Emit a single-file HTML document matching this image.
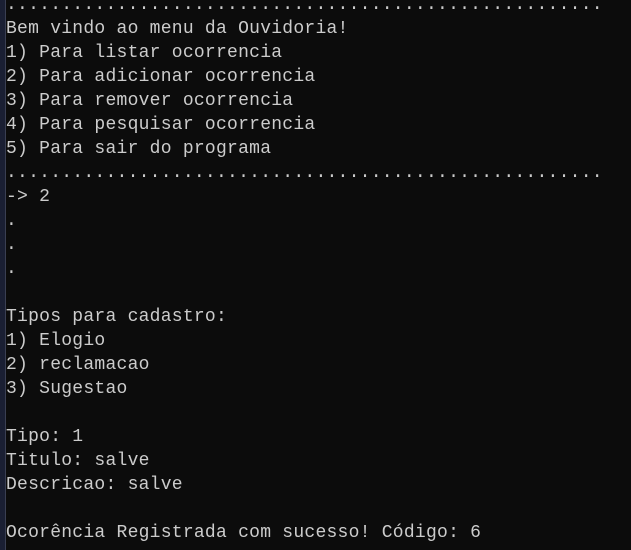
<!DOCTYPE html>
<html><head><meta charset="utf-8"><style>
html,body{margin:0;padding:0;width:631px;height:550px;overflow:hidden;background:#0c0c0c;}
.strip{position:absolute;left:0;top:0;width:5px;height:550px;background:#1a1f33;border-right:1px solid #3a3f52;}
pre{position:absolute;left:6px;top:-7px;margin:0;font-family:"Liberation Mono",monospace;font-size:18px;letter-spacing:0.25px;line-height:24px;color:#cccccc;white-space:pre;}
</style></head><body>
<div class="strip"></div>
<pre>......................................................
Bem vindo ao menu da Ouvidoria!
1) Para listar ocorrencia
2) Para adicionar ocorrencia
3) Para remover ocorrencia
4) Para pesquisar ocorrencia
5) Para sair do programa
......................................................
-&gt; 2
.
.
.

Tipos para cadastro:
1) Elogio
2) reclamacao
3) Sugestao

Tipo: 1
Titulo: salve
Descricao: salve

Ocorência Registrada com sucesso! Código: 6</pre>
</body></html>
